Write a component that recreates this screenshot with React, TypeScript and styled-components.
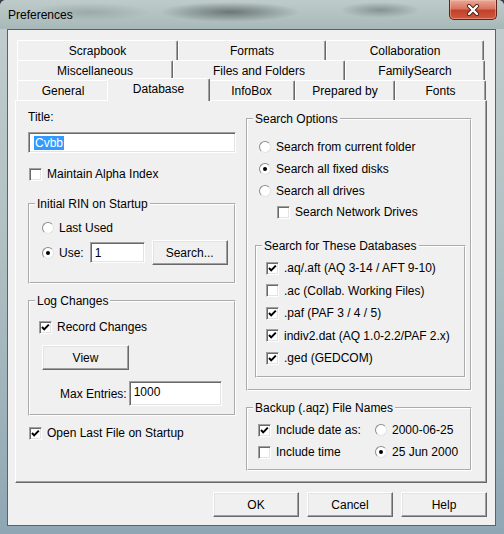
import styled, { createGlobalStyle } from "styled-components";
import type { ReactNode } from "react";

const GlobalStyle = createGlobalStyle`
  html, body {
    margin: 0;
    padding: 0;
  }
  body {
    background: #3b4146;
    font-family: "Liberation Sans", Arial, sans-serif;
    font-size: 12px;
    color: #000;
  }
`;

const Window = styled.div`
  width: 504px;
  height: 534px;
  display: flex;
  flex-direction: column;
  border-radius: 6px 6px 0 0;
  background: linear-gradient(to bottom, #c2cdce 0%, #b1c1c3 45%, #8fa7b4 100%);
`;

const TitleBar = styled.div`
  height: 29px;
  flex: none;
  display: flex;
  align-items: flex-start;
  justify-content: space-between;
  border-radius: 6px 6px 0 0;
  background:
    radial-gradient(ellipse 70px 10px at 230px 12px, rgba(45, 55, 55, 0.55), transparent),
    radial-gradient(ellipse 40px 8px at 380px 10px, rgba(45, 55, 55, 0.35), transparent),
    radial-gradient(ellipse 60px 9px at 90px 12px, rgba(60, 70, 70, 0.2), transparent),
    linear-gradient(to bottom, #bfcbcb, #a8b8b8);
`;

const TitleText = styled.span`
  font-size: 12px;
  padding: 8px 0 0 8px;
  color: #000;
`;

const CloseButton = styled.div`
  width: 48px;
  height: 20px;
  margin-right: 7px;
  box-sizing: border-box;
  display: flex;
  align-items: center;
  justify-content: center;
  border: 1px solid #5e2418;
  border-top: none;
  border-radius: 0 0 5px 5px;
  background: linear-gradient(to bottom, #e9a999 0%, #d7755f 45%, #c2402a 55%, #cf5a3e 100%);
  box-shadow: inset 0 0 0 1px rgba(255, 200, 180, 0.45);
`;

const Client = styled.div`
  flex: 1;
  margin: 0 8px 8px 7px;
  border: 1px solid #56656b;
  background: #f0f0f0;
  display: flex;
  flex-direction: column;
`;

const TabControl = styled.div`
  margin: 10px 0 0 7px;
  width: 472px;
`;

const TabRow = styled.div`
  display: flex;
  height: 20px;
  padding: 0 2px;
`;

const Tab = styled.div<{ $w: number; $active?: boolean }>`
  flex: none;
  position: relative;
  z-index: ${(p) => (p.$active ? 2 : 1)};
  box-sizing: border-box;
  width: ${(p) => p.$w}px;
  height: ${(p) => (p.$active ? 23 : 20)}px;
  margin: ${(p) => (p.$active ? "-2px -2px -1px" : "0")};
  padding-bottom: ${(p) => (p.$active ? 3 : 0)}px;
  display: flex;
  align-items: center;
  justify-content: center;
  background: #f0f0f0;
  border-top: 1px solid #fff;
  border-left: 1px solid #fff;
  border-right: 1px solid #696969;
  border-radius: 2px 2px 0 0;
  box-shadow: inset -1px 0 0 #a0a0a0;
`;

const Panel = styled.div`
  height: 383px;
  box-sizing: border-box;
  border: 1px solid;
  border-color: #fff #696969 #696969 #fff;
  box-shadow: inset -1px -1px 0 #a0a0a0;
  display: grid;
  grid-template-columns: 208px 226px;
  column-gap: 10px;
  align-items: start;
  padding: 9px 0 0 12px;
`;

const Column = styled.div`
  display: flex;
  flex-direction: column;
`;

const Label = styled.div`
  line-height: 14px;
  height: 14px;
`;

const Input = styled.div<{ $w: number; $h: number }>`
  width: ${(p) => p.$w}px;
  height: ${(p) => p.$h}px;
  flex: none;
  box-sizing: border-box;
  background: #fff;
  border: 1px solid;
  border-color: #a0a0a0 #fff #fff #a0a0a0;
  box-shadow: inset 1px 1px 0 #696969, inset -1px -1px 0 #e3e3e3;
  padding: 3px 4px;
  line-height: 14px;
  white-space: nowrap;
`;

const Selected = styled.span`
  background: #3399ff;
  color: #fff;
  padding: 0 1px;
  margin-left: 1px;
`;

const Button = styled.div<{ $w: number }>`
  width: ${(p) => p.$w}px;
  height: 25px;
  flex: none;
  box-sizing: border-box;
  display: flex;
  align-items: center;
  justify-content: center;
  background: #f0f0f0;
  border: 1px solid;
  border-color: #fff #696969 #696969 #fff;
  box-shadow: inset -1px -1px 0 #a0a0a0, inset 1px 1px 0 #e3e3e3;
`;

const Group = styled.fieldset`
  margin: 0;
  min-width: 0;
  padding: 0;
  border: 2px groove #fff;
`;

const GroupBody = styled.div<{ $pad: string }>`
  padding: ${(p) => p.$pad};
  display: flex;
  flex-direction: column;
`;

const Legend = styled.legend`
  margin-left: 5px;
  padding: 0 2px;
  line-height: 14px;
`;

const OptionRow = styled.label<{ $gap?: number }>`
  display: flex;
  align-items: center;
  height: 16px;
  gap: ${(p) => p.$gap ?? 5}px;
  white-space: nowrap;
`;

const CheckBox = styled.span`
  width: 13px;
  height: 13px;
  flex: none;
  box-sizing: border-box;
  background: #fff;
  border: 1px solid;
  border-color: #a0a0a0 #fff #fff #a0a0a0;
  box-shadow: inset 1px 1px 0 #696969, inset -1px -1px 0 #e3e3e3;
  display: flex;
`;

const RadioCircle = styled.span`
  width: 12px;
  height: 12px;
  flex: none;
  box-sizing: border-box;
  border-radius: 50%;
  background: #fff;
  border: 1px solid;
  border-color: #8c8c8c #e3e3e3 #e3e3e3 #8c8c8c;
  display: flex;
  align-items: center;
  justify-content: center;
`;

const RadioDot = styled.span`
  width: 4px;
  height: 4px;
  border-radius: 50%;
  background: #000;
`;

const Stack = styled.div<{ $gap: number; $top?: number; $left?: number }>`
  display: flex;
  flex-direction: column;
  gap: ${(p) => p.$gap}px;
  margin-top: ${(p) => p.$top ?? 0}px;
  margin-left: ${(p) => p.$left ?? 0}px;
`;

const InlineRow = styled.div<{ $top?: number; $left?: number }>`
  display: flex;
  align-items: center;
  margin-top: ${(p) => p.$top ?? 0}px;
  padding-left: ${(p) => p.$left ?? 0}px;
  white-space: nowrap;
`;

const BackupGrid = styled.div`
  display: grid;
  grid-template-columns: 117px auto;
  row-gap: 6px;
`;

const ButtonBar = styled.div`
  display: flex;
  justify-content: flex-end;
  gap: 8px;
  margin-top: 9px;
  padding-right: 8px;
`;

const Spaced = styled.div<{ $top: number; $left?: number }>`
  margin-top: ${(p) => p.$top}px;
  margin-left: ${(p) => p.$left ?? 0}px;
`;

function Check({ checked, children }: { checked?: boolean; children: ReactNode }) {
  return (
    <OptionRow>
      <CheckBox>
        {checked && (
          <svg width="11" height="11" viewBox="0 0 11 11">
            <polyline points="2,5 4.2,7.4 8.8,2.6" fill="none" stroke="#000" strokeWidth="2" />
          </svg>
        )}
      </CheckBox>
      <span>{children}</span>
    </OptionRow>
  );
}

function Radio({ checked, children }: { checked?: boolean; children: ReactNode }) {
  return (
    <OptionRow>
      <RadioCircle>{checked && <RadioDot />}</RadioCircle>
      <span>{children}</span>
    </OptionRow>
  );
}

const rows = [
  [
    { label: "Scrapbook", w: 161 },
    { label: "Formats", w: 148 },
    { label: "Collaboration", w: 158 },
  ],
  [
    { label: "Miscellaneous", w: 156 },
    { label: "Files and Folders", w: 172 },
    { label: "FamilySearch", w: 140 },
  ],
  [
    { label: "General", w: 92 },
    { label: "Database", w: 103, active: true },
    { label: "InfoBox", w: 87 },
    { label: "Prepared by", w: 100 },
    { label: "Fonts", w: 91 },
  ],
];

export default function App() {
  return (
    <>
      <GlobalStyle />
      <Window>
        <TitleBar>
          <TitleText>Preferences</TitleText>
          <CloseButton>
            <svg width="14" height="12" viewBox="0 0 14 12">
              <path d="M3 2 L11 10 M11 2 L3 10" stroke="#4a1a10" strokeWidth="4" strokeLinecap="round" />
              <path d="M3 2 L11 10 M11 2 L3 10" stroke="#fff" strokeWidth="2.4" strokeLinecap="round" />
            </svg>
          </CloseButton>
        </TitleBar>
        <Client>
          <TabControl>
            {rows.map((row, i) => (
              <TabRow key={i}>
                {row.map((t) => (
                  <Tab key={t.label} $w={t.w} $active={"active" in t && t.active}>
                    {t.label}
                  </Tab>
                ))}
              </TabRow>
            ))}
            <Panel>
              <Column>
                <Label>Title:</Label>
                <Spaced $top={8}>
                  <Input $w={208} $h={21}>
                    <Selected>Cvbb</Selected>
                  </Input>
                </Spaced>
                <Spaced $top={13} $left={1}>
                  <Check>Maintain Alpha Index</Check>
                </Spaced>
                <Spaced $top={15}>
                  <Group>
                    <Legend>Initial RIN on Startup</Legend>
                    <GroupBody $pad="9px 0 17px 12px">
                      <Radio>Last Used</Radio>
                      <InlineRow $top={4}>
                        <Radio checked>Use:</Radio>
                        <Spaced $top={0} $left={6}>
                          <Input $w={55} $h={21}>1</Input>
                        </Spaced>
                        <Spaced $top={0} $left={7}>
                          <Button $w={76}>Search...</Button>
                        </Spaced>
                      </InlineRow>
                    </GroupBody>
                  </Group>
                </Spaced>
                <Spaced $top={10}>
                  <Group>
                    <Legend>Log Changes</Legend>
                    <GroupBody $pad="11px 0 8px 9px">
                      <Check checked>Record Changes</Check>
                      <Spaced $top={10} $left={3}>
                        <Button $w={87}>View</Button>
                      </Spaced>
                      <InlineRow $top={11} $left={21}>
                        <span>Max Entries:</span>
                        <Spaced $top={0} $left={2}>
                          <Input $w={93} $h={25}>1000</Input>
                        </Spaced>
                      </InlineRow>
                    </GroupBody>
                  </Group>
                </Spaced>
                <Spaced $top={9} $left={1}>
                  <Check checked>Open Last File on Startup</Check>
                </Spaced>
              </Column>

              <Column>
                <Spaced $top={2}>
                  <Group>
                    <Legend>Search Options</Legend>
                    <GroupBody $pad="13px 4px 11px 7px">
                      <Stack $gap={6} $left={4}>
                        <Radio>Search from current folder</Radio>
                        <Radio checked>Search all fixed disks</Radio>
                        <Radio>Search all drives</Radio>
                      </Stack>
                      <Spaced $top={5} $left={22}>
                        <Check>Search Network Drives</Check>
                      </Spaced>
                      <Spaced $top={19}>
                        <Group>
                          <Legend>Search for These Databases</Legend>
                          <GroupBody $pad="7px 0 10px 9px">
                            <Stack $gap={6.5}>
                              <Check checked>.aq/.aft (AQ 3-14 / AFT 9-10)</Check>
                              <Check>.ac (Collab. Working Files)</Check>
                              <Check checked>.paf (PAF 3 / 4 / 5)</Check>
                              <Check checked>indiv2.dat (AQ 1.0-2.2/PAF 2.x)</Check>
                              <Check checked>.ged (GEDCOM)</Check>
                            </Stack>
                          </GroupBody>
                        </Group>
                      </Spaced>
                    </GroupBody>
                  </Group>
                </Spaced>
                <Spaced $top={10}>
                  <Group>
                    <Legend>Backup (.aqz) File Names</Legend>
                    <GroupBody $pad="7px 0 9px 10px">
                      <BackupGrid>
                        <Check checked>Include date as:</Check>
                        <Radio>2000-06-25</Radio>
                        <Check>Include time</Check>
                        <Radio checked>25 Jun 2000</Radio>
                      </BackupGrid>
                    </GroupBody>
                  </Group>
                </Spaced>
              </Column>
            </Panel>
          </TabControl>
          <ButtonBar>
            <Button $w={86}>OK</Button>
            <Button $w={86}>Cancel</Button>
            <Button $w={86}>Help</Button>
          </ButtonBar>
        </Client>
      </Window>
    </>
  );
}
